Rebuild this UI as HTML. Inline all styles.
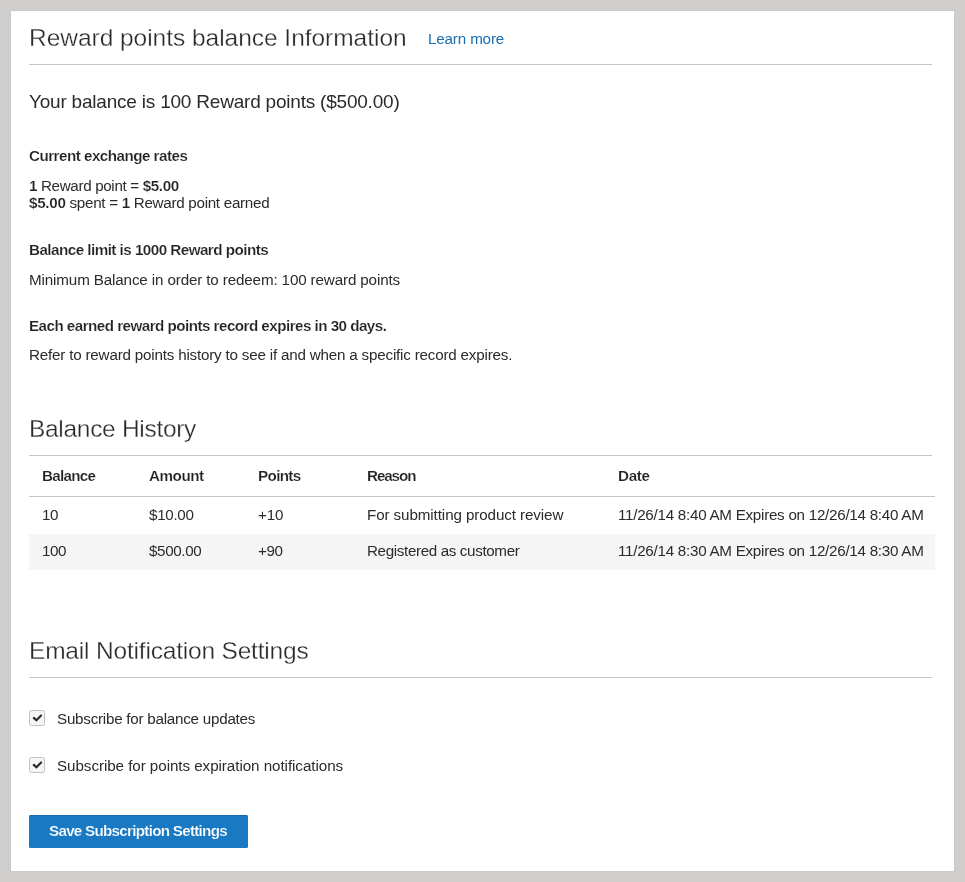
<!DOCTYPE html>
<html><head><meta charset="utf-8"><title>Reward points</title>
<style>
html,body{margin:0;padding:0;}
body{width:965px;height:882px;background:#cfcecc;position:relative;overflow:hidden;font-family:"Liberation Sans",sans-serif;}
.card{position:absolute;left:11px;top:11px;width:943px;height:860px;background:#fff;box-shadow:0 0 0 1px rgba(0,0,0,0.025);}
.t{position:absolute;white-space:nowrap;will-change:transform;}
.lt{-webkit-text-stroke:0.3px #fff;color:#2a2a2a!important;}
.t b{font-weight:700;color:#222;-webkit-text-stroke:0.18px #fff;}
.bd{-webkit-text-stroke:0.18px #fff;}
#btn{-webkit-text-stroke:0.18px #1979c3;}
.hr{position:absolute;height:1px;background:#c6c6c6;}
.row2{position:absolute;left:29px;top:534px;width:906px;height:36px;background:#f5f5f5;}
.cb{position:absolute;left:29px;width:14px;height:14px;border:1px solid #c2c2c2;border-radius:2.5px;background:#f6f6f6;}
.cb svg{position:absolute;left:-1px;top:-1px;}
.btn{position:absolute;left:29px;top:815px;width:219px;height:33px;background:#1979c3;border-radius:1.5px;box-shadow:inset 0 1px 0 rgba(0,0,0,0.12);}
</style></head><body>
<div class="card"></div>
<div class="hr" style="left:29px;top:64px;width:903px"></div>
<div class="hr" style="left:29px;top:455px;width:903px"></div>
<div class="hr" style="left:29px;top:496px;width:906px"></div>
<div class="row2"></div>
<div class="hr" style="left:29px;top:677px;width:903px"></div>
<div class="cb" style="top:710px"><svg width="16" height="16" viewBox="0 0 16 16"><path d="M4.8 7.9 L7.4 10.3 L12.1 5.5" fill="none" stroke="#2b2b2b" stroke-width="2.15" stroke-linecap="round" stroke-linejoin="miter"/></svg></div>
<div class="cb" style="top:757px"><svg width="16" height="16" viewBox="0 0 16 16"><path d="M4.8 7.9 L7.4 10.3 L12.1 5.5" fill="none" stroke="#2b2b2b" stroke-width="2.15" stroke-linecap="round" stroke-linejoin="miter"/></svg></div>
<div class="btn"></div>
<div class="t lt" id="title" style="left:29.40px;top:23.31px;font-size:24.5px;line-height:30px;color:#2b2b2b;letter-spacing:-0.031px">Reward points balance Information</div>
<div class="t" id="learn" style="left:428.10px;top:23.73px;font-size:15.2px;line-height:30px;color:#1a6fb2;letter-spacing:-0.156px">Learn more</div>
<div class="t" id="bal" style="left:29.00px;top:86.82px;font-size:19px;line-height:30px;color:#2b2b2b;letter-spacing:-0.210px">Your balance is 100 Reward points ($500.00)</div>
<div class="t bd" id="cur" style="left:28.60px;top:140.73px;font-size:15.2px;line-height:30px;color:#222;font-weight:700;letter-spacing:-0.514px">Current exchange rates</div>
<div class="t" id="r1" style="left:28.60px;top:170.63px;font-size:15.2px;line-height:30px;color:#2b2b2b;letter-spacing:-0.343px"><b>1</b> Reward point = <b>$5.00</b></div>
<div class="t" id="r2" style="left:28.80px;top:188.23px;font-size:15.2px;line-height:30px;color:#2b2b2b;letter-spacing:-0.288px"><b>$5.00</b> spent = <b>1</b> Reward point earned</div>
<div class="t bd" id="lim" style="left:28.60px;top:235.43px;font-size:15.2px;line-height:30px;color:#222;font-weight:700;letter-spacing:-0.524px">Balance limit is 1000 Reward points</div>
<div class="t" id="min" style="left:28.60px;top:264.73px;font-size:15.2px;line-height:30px;color:#2b2b2b;letter-spacing:-0.135px">Minimum Balance in order to redeem: 100 reward points</div>
<div class="t bd" id="each" style="left:28.60px;top:311.43px;font-size:15.2px;line-height:30px;color:#222;font-weight:700;letter-spacing:-0.529px">Each earned reward points record expires in 30 days.</div>
<div class="t" id="refer" style="left:28.60px;top:339.93px;font-size:15.2px;line-height:30px;color:#2b2b2b;letter-spacing:-0.195px">Refer to reward points history to see if and when a specific record expires.</div>
<div class="t lt" id="bh" style="left:29.40px;top:414.31px;font-size:24.5px;line-height:30px;color:#2b2b2b;letter-spacing:-0.300px">Balance History</div>
<div class="t bd" id="th_bal" style="left:42.00px;top:460.83px;font-size:15.2px;line-height:30px;color:#222;font-weight:700;letter-spacing:-0.700px">Balance</div>
<div class="t bd" id="th_amt" style="left:149.40px;top:460.83px;font-size:15.2px;line-height:30px;color:#222;font-weight:700;letter-spacing:-0.440px">Amount</div>
<div class="t bd" id="th_pts" style="left:257.80px;top:460.83px;font-size:15.2px;line-height:30px;color:#222;font-weight:700;letter-spacing:-0.640px">Points</div>
<div class="t bd" id="th_rsn" style="left:366.80px;top:460.83px;font-size:15.2px;line-height:30px;color:#222;font-weight:700;letter-spacing:-1.080px">Reason</div>
<div class="t bd" id="th_date" style="left:618.40px;top:460.83px;font-size:15.2px;line-height:30px;color:#222;font-weight:700;letter-spacing:-0.333px">Date</div>
<div class="t" id="r1_bal" style="left:42.00px;top:499.73px;font-size:15.2px;line-height:30px;color:#2b2b2b;letter-spacing:-0.400px">10</div>
<div class="t" id="r1_amt" style="left:149.40px;top:499.73px;font-size:15.2px;line-height:30px;color:#2b2b2b;letter-spacing:-0.320px">$10.00</div>
<div class="t" id="r1_pts" style="left:257.80px;top:499.73px;font-size:15.2px;line-height:30px;color:#2b2b2b;letter-spacing:-0.200px">+10</div>
<div class="t" id="r1_rsn" style="left:366.80px;top:499.73px;font-size:15.2px;line-height:30px;color:#2b2b2b;letter-spacing:-0.100px">For submitting product review</div>
<div class="t" id="r1_date" style="left:618.40px;top:499.73px;font-size:15.2px;line-height:30px;color:#2b2b2b;letter-spacing:-0.265px">11/26/14 8:40 AM Expires on 12/26/14 8:40 AM</div>
<div class="t" id="r2_bal" style="left:42.00px;top:536.13px;font-size:15.2px;line-height:30px;color:#2b2b2b;letter-spacing:-0.500px">100</div>
<div class="t" id="r2_amt" style="left:149.40px;top:536.13px;font-size:15.2px;line-height:30px;color:#2b2b2b;letter-spacing:-0.367px">$500.00</div>
<div class="t" id="r2_pts" style="left:257.80px;top:536.13px;font-size:15.2px;line-height:30px;color:#2b2b2b;letter-spacing:-0.400px">+90</div>
<div class="t" id="r2_rsn" style="left:366.80px;top:536.13px;font-size:15.2px;line-height:30px;color:#2b2b2b;letter-spacing:-0.362px">Registered as customer</div>
<div class="t" id="r2_date" style="left:618.40px;top:536.13px;font-size:15.2px;line-height:30px;color:#2b2b2b;letter-spacing:-0.265px">11/26/14 8:30 AM Expires on 12/26/14 8:30 AM</div>
<div class="t lt" id="ens" style="left:28.90px;top:636.41px;font-size:24.5px;line-height:30px;color:#2b2b2b;letter-spacing:-0.188px">Email Notification Settings</div>
<div class="t" id="cb1l" style="left:56.60px;top:703.93px;font-size:15.2px;line-height:30px;color:#2b2b2b;letter-spacing:-0.243px">Subscribe for balance updates</div>
<div class="t" id="cb2l" style="left:56.60px;top:751.23px;font-size:15.2px;line-height:30px;color:#2b2b2b;letter-spacing:-0.059px">Subscribe for points expiration notifications</div>
<div class="t bd" id="btn" style="left:48.50px;top:816.43px;font-size:15.2px;line-height:30px;color:#fff;font-weight:700;letter-spacing:-0.720px">Save Subscription Settings</div>
</body></html>
